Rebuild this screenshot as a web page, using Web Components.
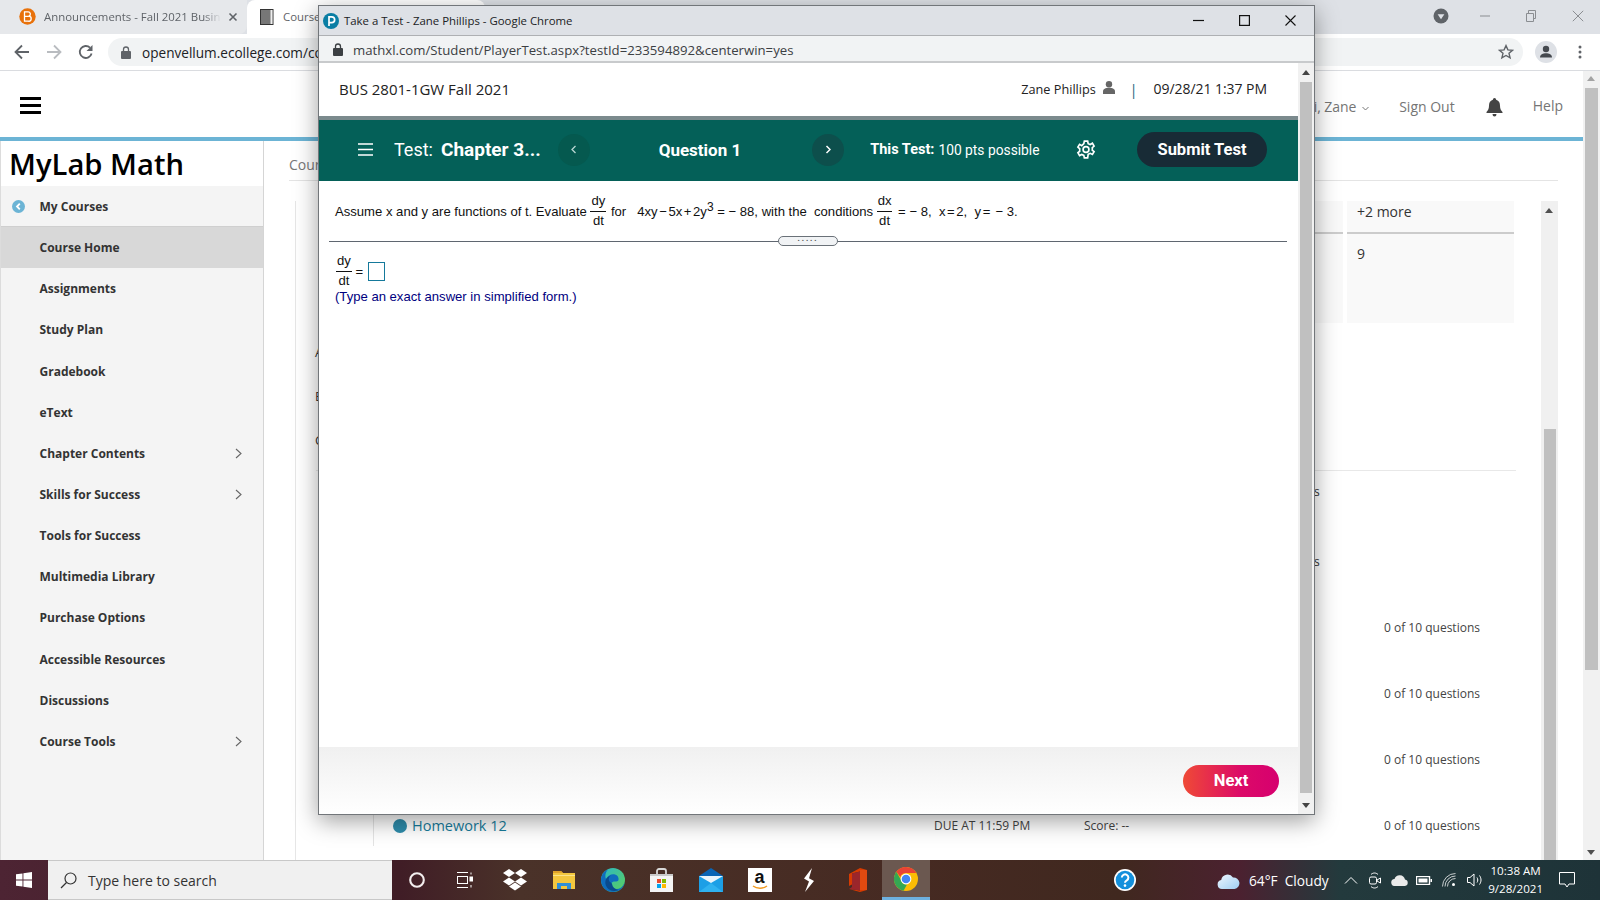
<!DOCTYPE html>
<html lang="en">
<head>
<meta charset="utf-8">
<title>Take a Test</title>
<style>
html,body{margin:0;padding:0;width:1600px;height:900px;overflow:hidden;background:#fff;font-family:"Open Sans",sans-serif}
body{display:flex;flex-direction:column;position:relative}
</style>
</head>
<body>
<chrome-tabs></chrome-tabs>
<chrome-toolbar></chrome-toolbar>
<lms-page>
  <nav-item slot="nav" back>My Courses</nav-item>
  <nav-item slot="nav" active>Course Home</nav-item>
  <nav-item slot="nav">Assignments</nav-item>
  <nav-item slot="nav">Study Plan</nav-item>
  <nav-item slot="nav">Gradebook</nav-item>
  <nav-item slot="nav">eText</nav-item>
  <nav-item slot="nav" more>Chapter Contents</nav-item>
  <nav-item slot="nav" more>Skills for Success</nav-item>
  <nav-item slot="nav">Tools for Success</nav-item>
  <nav-item slot="nav">Multimedia Library</nav-item>
  <nav-item slot="nav">Purchase Options</nav-item>
  <nav-item slot="nav">Accessible Resources</nav-item>
  <nav-item slot="nav">Discussions</nav-item>
  <nav-item slot="nav" more>Course Tools</nav-item>
</lms-page>
<win-taskbar></win-taskbar>
<test-window></test-window>

<script>
function define(name, html, setup){
  customElements.define(name, class extends HTMLElement{
    constructor(){super();this.attachShadow({mode:'open'}).innerHTML=html;}
    connectedCallback(){if(setup)setup(this);}
  });
}

define('chrome-tabs',`<style>
:host{display:flex;height:34px;background:#dee1e6;flex:none;position:relative;font:11.4px "Open Sans",sans-serif;color:#5f6368}
.t1{width:247px;height:34px;background:#e6e8eb;border-bottom-right-radius:8px;display:flex;align-items:center;box-sizing:border-box;padding-left:19px;padding-bottom:1px;flex:none}
.t1 .lbl{margin-left:8px;width:177px;overflow:hidden;white-space:nowrap;-webkit-mask-image:linear-gradient(90deg,#000 90%,transparent);mask-image:linear-gradient(90deg,#000 90%,transparent)}
.t1 .x{margin-left:7px}
.t2{width:238px;height:34px;background:#fff;border-radius:8px 8px 0 0;display:flex;align-items:center;padding-left:13px;padding-bottom:1px;box-sizing:border-box;flex:none}
.t2 .lbl{margin-left:9px}
.sp{flex:1}
.ctl{display:flex;align-items:center;height:34px;padding-bottom:2px;box-sizing:border-box}
.ctl svg{display:block}
</style>
<div class="t1">
<svg width="17" height="17" viewBox="0 0 17 17"><circle cx="8.5" cy="8.5" r="8.2" fill="#e8710a"/><path d="M5.5 3.8h3.6a2.3 2.3 0 0 1 .9 4.4 2.5 2.5 0 0 1-.7 5H5.5zM5.5 8.3h4.2" fill="none" stroke="#fff" stroke-width="1.3"/></svg>
<span class="lbl">Announcements - Fall 2021 Busin</span>
<svg class="x" width="10" height="10" viewBox="0 0 10 10"><path d="M1.5 1.5l7 7M8.5 1.5l-7 7" stroke="#5f6368" stroke-width="1.6"/></svg>
</div>
<div class="t2">
<svg width="14" height="16" viewBox="0 0 14 16"><rect x=".5" y=".5" width="12.5" height="15" fill="#777" stroke="#333"/><rect x="10.5" y="1" width="2" height="14" fill="#eee"/></svg>
<span class="lbl">Course</span>
</div>
<div class="sp"></div>
<div class="ctl" style="margin-right:16px">
<svg width="16" height="16" viewBox="0 0 16 16" style="margin-right:30px"><circle cx="8" cy="8" r="7.5" fill="#5f6368"/><path d="M4.6 6.3h6.8L8 11.2z" fill="#dee1e6"/></svg>
<svg width="12" height="12" viewBox="0 0 12 12" style="margin-right:34px"><path d="M1 6h10" stroke="#8a8d91" stroke-width="1"/></svg>
<svg width="12" height="12" viewBox="0 0 12 12" style="margin-right:35px"><path d="M1.5 3.5h7v8h-7zM3.5 3.5V.5h7v8h-2" fill="none" stroke="#8a8d91"/></svg>
<svg width="12" height="12" viewBox="0 0 12 12"><path d="M.8.8l10.4 10.4M11.2.8L.8 11.2" stroke="#8a8d91" stroke-width="1"/></svg>
</div>`);

define('chrome-toolbar',`<style>
:host{display:flex;align-items:center;height:37px;background:#fff;border-bottom:1px solid #dadce0;box-sizing:border-box;flex:none;position:relative}
.nav{display:flex;align-items:center;width:108px;box-sizing:border-box;padding-left:14px;gap:16px;flex:none}
.pill{width:1415px;height:28px;border-radius:14px;background:#f1f3f4;display:flex;align-items:center;box-sizing:border-box;padding-left:13px;flex:none;font:13.6px "Open Sans",sans-serif;color:#202124}
.pill span{margin-left:11px}
.sp{flex:1}
svg{display:block;flex:none}
</style>
<div class="nav">
<svg width="16" height="16" viewBox="0 0 16 16"><path d="M15 8H2M8 1.5L1.5 8 8 14.5" fill="none" stroke="#5f6368" stroke-width="1.8"/></svg>
<svg width="16" height="16" viewBox="0 0 16 16"><path d="M1 8h13M8 1.5L14.5 8 8 14.5" fill="none" stroke="#b9bcc0" stroke-width="1.8"/></svg>
<svg width="16" height="16" viewBox="0 0 16 16"><path d="M13.6 9.5A6 6 0 1 1 12 3.7" fill="none" stroke="#5f6368" stroke-width="1.8"/><path d="M14.5 1v6h-6z" fill="#5f6368"/></svg>
</div>
<div class="pill">
<svg width="10" height="13" viewBox="0 0 10 13"><path d="M2.5 5.5V3.5a2.5 2.5 0 0 1 5 0v2" fill="none" stroke="#5f6368" stroke-width="1.3"/><rect y="5" width="10" height="8" rx="1" fill="#5f6368"/></svg>
<span>openvellum.ecollege.com/co</span>
<div class="sp"></div>
<svg width="16" height="16" viewBox="0 0 16 16" style="margin-right:9px"><path d="M8 1.6l1.9 4.3 4.6.4-3.5 3 1.1 4.6L8 11.5l-4.1 2.4L5 9.3l-3.5-3 4.6-.4z" fill="none" stroke="#5f6368" stroke-width="1.4"/></svg>
</div>
<svg width="22" height="22" viewBox="0 0 22 22" style="margin-left:12px"><circle cx="11" cy="11" r="11" fill="#dee1e6"/><circle cx="11" cy="8" r="3.2" fill="#45494f"/><path d="M5 16.5c0-3 3-4.3 6-4.3s6 1.3 6 4.3z" fill="#45494f"/></svg>
<svg width="4" height="14" viewBox="0 0 4 14" style="margin-left:21px"><circle cx="2" cy="2" r="1.5" fill="#5f6368"/><circle cx="2" cy="7" r="1.5" fill="#5f6368"/><circle cx="2" cy="12" r="1.5" fill="#5f6368"/></svg>`);

define('nav-item',`<style>
:host{display:flex;align-items:center;height:41.15px;box-sizing:border-box;padding-left:38.5px;font:700 12px "Open Sans",sans-serif;color:#333;position:relative;flex:none}
:host([active]){background:#d8d8d8}
:host([back]){border-bottom:1px solid #cfcfcf}
.i,.c{display:none;position:absolute}
:host([back]) .i{display:block;left:11px;top:14px}
:host([more]) .c{display:block;left:234px;top:15px}
</style>
<svg class="i" width="13" height="13" viewBox="0 0 13 13"><circle cx="6.5" cy="6.5" r="6.5" fill="#6cb4d5"/><path d="M7.8 3.6L5 6.5l2.8 2.9" fill="none" stroke="#fff" stroke-width="1.8"/></svg>
<svg class="c" width="7" height="11" viewBox="0 0 7 11"><path d="M1 1l5 4.5L1 10" fill="none" stroke="#666" stroke-width="1.1"/></svg>
<slot></slot>`);

define('work-row',`<style>
:host{display:grid;grid-template-columns:97px 541px 150px 300px 1fr;align-items:center;height:var(--h,66px);font:12px "Open Sans",sans-serif;color:#444;position:relative;flex:none}
::slotted(*){white-space:nowrap}
</style><slot></slot>`);

define('lms-page',`<style>
:host{display:flex;flex:1;min-height:0;background:#fff;font-family:"Open Sans",sans-serif;color:#757575}
.main{flex:1;min-width:0;display:flex;flex-direction:column}
header{height:66px;box-sizing:border-box;display:flex;align-items:center;flex:none;padding:3px 0 0 20px;font-size:14px}
.burger{width:21px;height:17px;display:flex;flex-direction:column;justify-content:space-between}
.burger i{display:block;height:3.4px;background:#000}
.sp{flex:1}
.blue{height:4px;background:#6cb4d5;flex:none}
.body{flex:1;min-height:0;display:flex}
aside{width:264px;flex:none;box-sizing:border-box;border-left:1px solid #dcdcdc;border-right:1px solid #d5d5d5;background:#f4f4f4;display:flex;flex-direction:column}
.brand{height:45px;background:#fff;flex:none;font:600 29.2px/47px "Open Sans",sans-serif;color:#000;padding-left:8px;white-space:nowrap;overflow:hidden}
.content{flex:1;min-width:0;display:flex;flex-direction:column;padding:0 25px;overflow:hidden}
.crumb{height:40px;flex:none;border-bottom:1px solid #e4e4e4;box-sizing:border-box;font-size:14px;line-height:47px;color:#777}
.split{flex:1;min-height:0;display:flex;margin-top:20px;margin-left:6px;border-left:1px solid #e6e6e6;overflow:hidden}
.area{flex:1;min-width:0;display:flex;flex-direction:column}
.cols{height:122px;flex:none;display:flex;justify-content:flex-end;gap:4px;padding-right:27px;font-size:14px;color:#333}
.col{width:167px;background:#f9f9f9;display:flex;flex-direction:column}
.col.short{width:100px}
.col .h{height:33px;box-sizing:border-box;border-bottom:2px solid #ccc;padding-left:10px;line-height:22px}
.col .v{padding:10px;line-height:20px}
.letters{height:147px;flex:none;padding:7px 0 0 19px;font-size:13px;color:#333;line-height:44px;box-sizing:border-box}
.hr{height:1px;background:#e8e8e8;flex:none;margin:0 25px 0 20px}
.rail{height:54px;width:78px;border-right:1px solid #e4e4e4;align-self:start;box-sizing:border-box}
.hw{display:flex;align-items:center;gap:5px;font:500 14.5px "Open Sans",sans-serif;color:#177c9c;margin-top:1px}
.dot{width:14px;height:14px;border-radius:50%;background:#2e8cab}
.s{padding-left:230px;color:#333;font-size:12px}
</style>
<div class="main">
<header>
<div class="burger"><i></i><i></i><i></i></div>
<div class="sp"></div>
<span style="margin:2px 6px 0 0;letter-spacing:-.1px">i, Zane</span>
<svg width="7" height="5" viewBox="0 0 7 5" style="margin:5px 30px 0 0"><path d="M.5 1l3 3 3-3" fill="none" stroke="#777"/></svg>
<span style="margin:2px 31px 0 0">Sign Out</span>
<svg width="17" height="19" viewBox="0 0 17 19" style="margin:4px 30px 0 0"><path d="M8.5 0a1.6 1.6 0 0 1 1.6 1.7c3 .8 3.9 3.3 3.9 6 0 3 1 4.700 2.500 6.300v1H.5v-1C2 12.400 3 10.700 3 7.700c0-2.700.9-5.200 3.900-6A1.600 1.600 0 0 1 8.500 0zM6.500 16h4a2 2.500 0 0 1-4 0z" fill="#444"/></svg>
<span style="margin:0 20px 0 0">Help</span>
</header>
<div class="blue"></div>
<div class="body">
<aside><div class="brand">MyLab Math</div><slot name="nav"></slot></aside>
<div class="content">
<div class="crumb">Course Home</div>
<div class="split">
<div class="area">
<div class="cols">
<div class="col short"><div class="h"></div></div>
<div class="col"><div class="h">+2 more</div><div class="v">9</div></div>
</div>
<div class="letters">A<br>E<br>C</div>
<div class="hr"></div>
<work-row style="--h:41px"><span></span><span></span><span></span><span class="s">s</span><span></span></work-row>
<work-row style="margin-top:16px"><span></span><span></span><span></span><span class="s">s</span><span></span></work-row>
<work-row><span></span><span></span><span></span><span></span><span>0 of 10 questions</span></work-row>
<work-row><span></span><span></span><span></span><span></span><span>0 of 10 questions</span></work-row>
<work-row><span></span><span></span><span></span><span></span><span>0 of 10 questions</span></work-row>
<work-row><span class="rail"></span><span class="hw"><span class="dot"></span>Homework 12</span><span>DUE AT 11:59 PM</span><span>Score: --</span><span>0 of 10 questions</span></work-row>
</div>
<scroll-bar></scroll-bar>
</div>
</div>
</div>
</div>
<page-scroll></page-scroll>`);

define('scroll-bar',`<style>
:host{display:block;width:17px;background:#f0f0f0;flex:none;position:relative}
.thumb{position:absolute;left:3px;width:12px;top:228px;bottom:0;background:#c0c0c0}
.up{position:absolute;left:4px;top:7px;width:0;height:0;border:4px solid transparent;border-top:0;border-bottom:5px solid #505050}
</style><div class="up"></div><div class="thumb"></div>`);

define('page-scroll',`<style>
:host{display:block;width:17px;background:#f1f1f1;flex:none;position:relative}
.thumb{position:absolute;left:2px;width:13px;top:17px;height:582px;background:#c0c0c0}
.up,.dn{position:absolute;left:4px;width:0;height:0;border:4px solid transparent}
.up{top:5px;border-top:0;border-bottom:5px solid #a3a3a3}
.dn{bottom:5px;border-bottom:0;border-top:5px solid #505050}
</style><div class="up"></div><div class="thumb"></div><div class="dn"></div>`);

define('tray-cell',`<style>
:host{display:flex;align-items:center;justify-content:center;width:49px;height:40px;flex:none;box-sizing:border-box}
:host([active]){background:#6b5850;border-bottom:3px solid #6db1e0;width:48px}
</style><slot></slot>`);

define('win-taskbar',`<style>
:host{display:flex;align-items:center;height:40px;flex:none;color:#fff;font:14px "Open Sans",sans-serif;
background:linear-gradient(90deg,#4d2433 0,#401d26 400px,#4a3229 520px,#462a22 900px,#40281f 1120px,#4b2130 1240px,#233a3d 1340px,#1e3338 1600px)}
svg{display:block;flex:none}
.start{width:48px;display:flex;justify-content:center;flex:none}
.search{width:344px;height:40px;background:#f0f0f0;border:solid #c8c8c8;border-width:1px 0;box-sizing:border-box;display:flex;align-items:center;padding-left:12px;color:#333;flex:none}
.search span{margin-left:11px}
.apps{display:flex;flex:none}
.mid{width:206px;display:flex;justify-content:flex-end;flex:none}
.amz{width:24px;height:24px;background:#fff;display:flex;flex-direction:column;align-items:center;color:#111;font:700 18px/18px "Liberation Sans",sans-serif;position:relative}
.amz svg{position:absolute;bottom:2px;left:4px}
.wx{display:flex;align-items:center;margin-left:81px}
.wx span{margin-left:9px;white-space:pre;font-size:13.7px}
.tray{display:flex;align-items:center;margin-left:15px}
.clock{font-size:11.6px;line-height:18px;text-align:center;width:62px;margin-left:2px}
</style>
<div class="start"><svg width="16" height="16" viewBox="0 0 16 16" fill="#fff"><path d="M0 2.300l6.500-.9v6.200H0zM7.400 1.300L16 0v7.600H7.400zM0 8.400h6.500v6.200L0 13.700zM7.400 8.400H16V16l-8.600-1.200z"/></svg></div>
<div class="search"><svg width="17" height="17" viewBox="0 0 17 17"><circle cx="10.500" cy="6.500" r="5.500" fill="none" stroke="#333" stroke-width="1.200"/><path d="M6.500 10.500L1 16" stroke="#333" stroke-width="1.300"/></svg><span>Type here to search</span></div>
<div class="apps">
<tray-cell><svg width="16" height="16" viewBox="0 0 16 16"><circle cx="8" cy="8" r="6.800" fill="none" stroke="#f3eeee" stroke-width="2.100"/></svg></tray-cell>
<tray-cell><svg width="16" height="16" viewBox="0 0 16 16" fill="none" stroke="#fff" style="margin-left:-2px"><path d="M0 .500h11M0 15.500h11"/><rect x=".5" y="4.500" width="10" height="7"/><rect x="13" y="5" width="3" height="4" fill="#fff"/><path d="M14 .5v2M14 13v2.500"/></svg></tray-cell>
<tray-cell><svg width="24" height="22" viewBox="0 0 24 22" fill="#fff"><path d="M6 0l6 4-6 4-6-4zM18 0l6 4-6 4-6-4zM6 8.500l6 4-6 4-6-4zM18 8.500l6 4-6 4-6-4zM12 13.500l6 4-6 4-6-4z"/></svg></tray-cell>
<tray-cell><svg width="22" height="20" viewBox="0 0 22 20"><path d="M0 1h8l2 2h12v16H0z" fill="#f3c73f"/><path d="M0 1h8l2 2H0z" fill="#dfa22a"/><path d="M0 5h22v1H0z" fill="#fbe38a"/><path d="M4 19v-6h14v6h-4v-3H8v3z" fill="#2f8fd8"/></svg></tray-cell>
<tray-cell><svg width="24" height="24" viewBox="0 0 24 24"><defs><linearGradient id="eg" x1="0" y1="0" x2="1" y2="1"><stop offset="0" stop-color="#2ab7c8"/><stop offset="1" stop-color="#5dd05a"/></linearGradient></defs><circle cx="12" cy="12" r="12" fill="url(#eg)"/><path d="M24 13.500C23 20 18 24 12 24 5 24 0 18.500 0 12 0 7 3 3 7 1.500 4 4.500 4 8.500 5 11c2-4 6-5.500 9-4.500 2.500.8 4 3 3.500 5.500-.3 1.500-2 1.500-3.500 1.500-3 0-4.500 2-3.500 4.500 1 3 6 4 9 2 1.800-1.200 3.500-3.500 4.500-6.500z" fill="#0f6cbd"/><path d="M11 16c.500 3 3 5.500 6.500 6-6 2.500-12-.5-13-6-.8-4 1.500-7.500 5.500-8.500-3 2-2.500 5-1 6.500 1 1 2 1 2 2z" fill="#0a4a8c"/></svg></tray-cell>
<tray-cell><svg width="23" height="24" viewBox="0 0 23 24"><path d="M7 6V3a2 2 0 0 1 2-2h5a2 2 0 0 1 2 2v3" fill="none" stroke="#d8d8d8" stroke-width="1.800"/><rect y="6" width="23" height="18" fill="#f4f4f4"/><rect y="6" width="23" height="2" fill="#c9c9c9"/><rect x="7" y="11" width="4" height="4" fill="#e8492c"/><rect x="12" y="11" width="4" height="4" fill="#7fba00"/><rect x="7" y="16" width="4" height="4" fill="#00a4ef"/><rect x="12" y="16" width="4" height="4" fill="#ffb900"/></svg></tray-cell>
<tray-cell><svg width="24" height="24" viewBox="0 0 24 24"><path d="M12 0l12 8H0z" fill="#0a64b4"/><rect y="8" width="24" height="16" fill="#1c9fe6"/><path d="M0 8l12 7 12-7z" fill="#eaf4fb"/><path d="M0 24l12-9 12 9z" fill="#2fb2f0"/></svg></tray-cell>
<tray-cell><span class="amz">a<svg width="16" height="5" viewBox="0 0 16 5"><path d="M1 1c4 3 10 3 14 0" fill="none" stroke="#f29a1f" stroke-width="1.400"/></svg></span></tray-cell>
<tray-cell><svg width="12" height="24" viewBox="0 0 12 24" fill="#fff"><path d="M9 0L1 10.500l5 3L2 24l9-11-5-2.800z"/></svg></tray-cell>
<tray-cell><svg width="18" height="24" viewBox="0 0 18 24"><path d="M11 0l7 2v20l-7 2-11-3 11 1.500V3.500L3 5.500v11L0 18V6z" fill="#d83b01"/><path d="M3 5.500L11 3.500V22.500L0 21l3-2z" fill="#a4262c" opacity=".9"/><rect x="11" y="2" width="7" height="20" fill="#e04a10"/></svg></tray-cell>
<tray-cell active><svg width="24" height="24" viewBox="0 0 24 24"><circle cx="12" cy="12" r="12" fill="#fbbc05"/><path d="M12 0a12 12 0 0 1 10.400 6H12a6 6 0 0 0-5.700 4L2.300 4.800A12 12 0 0 1 12 0z" fill="#ea4335"/><path d="M2.300 4.800l4.900 8.500a5.400 5.400 0 0 0 5.800 4.200L9.500 23.700A12 12 0 0 1 2.300 4.800z" fill="#34a853"/><circle cx="12" cy="12" r="5.400" fill="#fff"/><circle cx="12" cy="12" r="4.300" fill="#4285f4"/></svg></tray-cell>
</div>
<div class="mid"><svg width="22" height="22" viewBox="0 0 22 22"><circle cx="11" cy="11" r="11" fill="#fff"/><circle cx="11" cy="11" r="9.300" fill="#1490dc"/><path d="M7.800 8.500a3.300 3.200 0 1 1 5 2.800c-1.100.7-1.800 1.200-1.800 2.400" fill="none" stroke="#fff" stroke-width="2"/><circle cx="11" cy="16.600" r="1.300" fill="#fff"/></svg></div>
<div class="wx"><svg width="23" height="17" viewBox="0 0 23 17"><defs><linearGradient id="cl" x1="0" y1="0" x2="1" y2="1"><stop offset="0" stop-color="#eef7ff"/><stop offset="1" stop-color="#9fcdf2"/></linearGradient></defs><path d="M5 17a4.500 4.500 0 0 1-.8-8.900A6.500 6.500 0 0 1 16 5.500 5.800 5.800 0 0 1 17.500 17z" fill="url(#cl)"/></svg><span>64°F  Cloudy</span></div>
<div class="tray">
<svg width="14" height="8" viewBox="0 0 14 8" style="margin-right:11px"><path d="M1 7.500l6-6 6 6" fill="none" stroke="#fff" stroke-width="1"/></svg>
<svg width="12" height="17" viewBox="0 0 12 17" fill="none" stroke="#fff" style="margin-right:10px"><path d="M2 2.500c2-2 5-2 7 0M2 14.500c2 2 5 2 7 0"/><rect x=".5" y="5" width="7" height="7" rx="1.500"/><path d="M8 8l3.500-2v5L8 9z"/></svg>
<svg width="18" height="11" viewBox="0 0 18 11" style="margin-right:7px"><path d="M4 11a3.500 3.500 0 0 1-.5-7A5.500 5.500 0 0 1 14 4.500a3.300 3.300 0 0 1 0 6.500z" fill="#eaeaea"/></svg>
<svg width="16" height="9" viewBox="0 0 16 9" style="margin-right:10px"><rect x=".5" y=".5" width="13" height="8" fill="none" stroke="#fff" stroke-width="1.400"/><rect x="2.500" y="2.500" width="9" height="4" fill="#fff"/><rect x="14.500" y="3" width="1.500" height="3" fill="#fff"/></svg>
<svg width="14" height="14" viewBox="0 0 14 14" fill="none" stroke="#fff" style="margin-right:11px"><path d="M.5 13.500a13 13 0 0 1 13-13M3 13.500a10.500 10.500 0 0 1 10.500-10.500M5.500 13.500a8 8 0 0 1 8-8" opacity=".75"/><circle cx="11.500" cy="11.500" r="1.500" fill="#fff" stroke="none"/></svg>
<svg width="16" height="14" viewBox="0 0 16 14" fill="none" stroke="#fff"><path d="M.5 4.500H3L7 1v12L3 9.500H.5zM10 4.500c1 1.500 1 3.500 0 5M12.500 2.500c2 3 2 6 0 9"/></svg>
</div>
<div class="clock">10:38 AM<br>9/28/2021</div>
<svg width="16" height="16" viewBox="0 0 16 16" fill="none" stroke="#fff" style="margin-left:12px"><path d="M.5.500h15v11.500H10l-2 3-2-3H.5z"/></svg>`);

define('q-frac',`<style>
:host{display:inline-flex;flex-direction:column;align-items:center;vertical-align:middle;flex:none;line-height:16px;font-size:13.1px;position:relative}
.n{border-bottom:1px solid #111;padding:0 1px 2px;min-width:15px;text-align:center;width:100%;box-sizing:border-box}
.d{padding-top:1px}
</style><div class="n"><slot name="n"></slot></div><div class="d"><slot name="d"></slot></div>`);

define('test-window',`<style>
:host{position:absolute;left:318px;top:5px;width:997px;height:810px;box-sizing:border-box;border:1px solid #72767a;background:#fff;display:flex;flex-direction:column;box-shadow:0 6px 22px rgba(0,0,0,.38);font-family:"Open Sans",sans-serif;color:#111}
svg{display:block;flex:none}
.title{height:30px;background:#dee1e6;display:flex;align-items:center;flex:none;border-bottom:1px solid #aeb0b3;box-sizing:border-box;padding-left:4px;font-size:11.4px;color:#202124}
.title span{margin-left:5px;white-space:nowrap}
.sp{flex:1}
.addr{height:27px;background:#f1f3f4;display:flex;align-items:center;flex:none;border-bottom:2px solid #c8cacc;box-sizing:border-box;padding:2px 0 0 14px;font-size:13.2px;color:#3c4043}
.addr span{margin-left:10px}
.wrap{flex:1;min-height:0;display:flex}
.page{flex:1;min-width:0;display:flex;flex-direction:column}
.top{height:53px;flex:none;display:flex;align-items:center;padding:0 31px 0 20px;color:#222;font-size:15px}
.band{height:4px;background:#7b8a8d;flex:none}
.bar{height:61px;background:#046058;flex:none;display:flex;align-items:center;color:#fff;font:15px Roboto,sans-serif;padding-bottom:2px;box-sizing:border-box}
.circ{width:32px;height:32px;border-radius:50%;background:#0d4f4c;display:flex;align-items:center;justify-content:center;flex:none}
.circ.l{background:#05594f}
.submit{width:130px;height:35px;border-radius:18px;background:#182b36;display:flex;align-items:center;justify-content:center;font:700 16.500px Roboto,sans-serif;flex:none}
.q{flex:1;min-height:0;box-sizing:border-box;font:13.1px "Liberation Sans",Arial,sans-serif;color:#111}
.line{display:flex;align-items:center;height:60px;margin-left:16px;white-space:pre}
.o{margin:0 1.6px}
.rule{height:1px;background:#5f6670;margin:0 11px 0 10px;position:relative;flex:none}
.handle{position:absolute;left:449px;top:-5px;width:60px;height:10px;box-sizing:border-box;border:1px solid #6a7178;border-radius:6px;background:#f1f3f5;text-align:center;font:700 8px/3px "Liberation Sans",sans-serif;letter-spacing:2px;color:#555}
.ans{margin:11px 0 0 17px;display:flex;align-items:center;white-space:pre}
.box{width:17px;height:19px;border:1px solid #15799b;box-sizing:border-box;margin-left:5px}
.hint{margin:-2px 0 0 16px;color:#000080;line-height:20px}
sup{font-size:12px;line-height:0;position:relative;top:1px;vertical-align:super}
.foot{height:67px;flex:none;background:linear-gradient(#f0f0f0,#fff);display:flex;justify-content:flex-end;padding:18px 19px 0 0;box-sizing:border-box}
.next{width:96px;height:32px;border-radius:16px;background:linear-gradient(90deg,#ef4a36,#dc0a68 60%,#d6006f);color:#fff;font:700 16.500px/32px Roboto,sans-serif;text-align:center}
.sb{width:16px;background:#f1f1f1;position:relative;flex:none}
.sb .t{position:absolute;left:2px;width:12px;top:19px;height:711px;background:#c0c0c0}
.up,.dn{position:absolute;left:4px;width:0;height:0;border:4px solid transparent}
.up{top:7px;border-top:0;border-bottom:5px solid #444}
.dn{bottom:6px;border-bottom:0;border-top:5px solid #444}
</style>
<div class="title">
<svg width="16" height="16" viewBox="0 0 16 16"><circle cx="8" cy="8" r="8" fill="#0a7ea4"/><path d="M6 13V3.800h2.700a2.900 2.900 0 0 1 0 5.900H6" fill="none" stroke="#fff" stroke-width="1.700"/></svg>
<span>Take a Test - Zane Phillips - Google Chrome</span>
<div class="sp"></div>
<svg width="11" height="11" viewBox="0 0 11 11" style="margin-right:35px"><path d="M0 5.500h11" stroke="#111" stroke-width="1.200"/></svg>
<svg width="11" height="11" viewBox="0 0 11 11" style="margin-right:35px"><rect x=".6" y=".6" width="9.800" height="9.800" fill="none" stroke="#111" stroke-width="1.200"/></svg>
<svg width="11" height="11" viewBox="0 0 11 11" style="margin-right:18px"><path d="M.5.500l10 10M10.500.500l-10 10" stroke="#111" stroke-width="1.100"/></svg>
</div>
<div class="addr">
<svg width="10" height="13" viewBox="0 0 10 13"><path d="M2.500 5.500V3.500a2.500 2.500 0 0 1 5 0v2" fill="none" stroke="#3c4043" stroke-width="1.300"/><rect y="5" width="10" height="8" rx="1" fill="#3c4043"/></svg>
<span>mathxl.com/Student/PlayerTest.aspx?testId=233594892&amp;centerwin=yes</span>
</div>
<div class="wrap">
<div class="page">
<div class="top">
<span style="margin-top:-2px">BUS 2801-1GW Fall 2021</span>
<div class="sp"></div>
<span style="font-size:12.7px;margin-top:-2px">Zane Phillips</span>
<svg width="12" height="13" viewBox="0 0 12 13" style="margin:-4px 0 0 7px"><circle cx="6" cy="3.200" r="3.200" fill="#666"/><path d="M0 13v-2.500C0 8 2.500 6.800 6 6.800s6 1.200 6 3.700V13z" fill="#666"/></svg>
<span style="margin-left:15px;color:#15607a;font-size:14px">|</span>
<span style="margin:-2px 0 0 16px;font-size:14px;letter-spacing:-.05px">09/28/21 1:37 PM</span>
</div>
<div class="band"></div>
<div class="bar">
<svg width="15" height="13" viewBox="0 0 15 13" style="margin-left:39px"><path d="M0 1h15M0 6.500h15M0 12h15" stroke="#fff" stroke-width="1.600"/></svg>
<span style="margin-left:21px;font-size:18px">Test:</span>
<b style="margin-left:8px;font-size:19px;white-space:nowrap">Chapter 3...</b>
<div class="circ l" style="margin-left:17px"><svg width="6" height="9" viewBox="0 0 6 9"><path d="M4.500 1L1 4.500 4.500 8" fill="none" stroke="#b9d6d2" stroke-width="1.300"/></svg></div>
<b style="margin-left:69px;font-size:17px;white-space:nowrap">Question 1</b>
<div class="circ" style="margin-left:71px"><svg width="6" height="9" viewBox="0 0 6 9"><path d="M1.500 1L5 4.500 1.500 8" fill="none" stroke="#fff" stroke-width="1.500"/></svg></div>
<b style="margin-left:26px;font-size:14.500px;white-space:nowrap">This Test:</b>
<span style="margin-left:4px;font-size:13.800px;white-space:nowrap">100 pts possible</span>
<svg width="20" height="21" viewBox="0 0 24 24" style="margin-left:36px" fill="none" stroke="#fff" stroke-width="2"><circle cx="12" cy="12" r="3.500"/><path d="M10 2h4l.6 3 2.500 1.100 2.600-1.600 2 3.400-2.200 2c.2.900.2 1.800 0 2.800l2.200 1.900-2 3.400-2.600-1.400-2.500 1.200L14 22h-4l-.6-2.900-2.500-1.200-2.600 1.400-2-3.400 2.200-1.900c-.2-1-.2-1.900 0-2.800l-2.200-2 2-3.400 2.600 1.600L9.400 5z"/></svg>
<div class="sp"></div>
<div class="submit" style="margin-right:31px">Submit Test</div>
</div>
<div class="q">
<div class="line"><span>Assume x and y are functions of t. Evaluate </span><q-frac><span slot="n">dy</span><span slot="d">dt</span></q-frac><span style="margin-left:1px"> for   4xy<span class="o">−</span>5x<span class="o">+</span>2y<sup>3</sup> = − 88, with the  conditions </span><q-frac><span slot="n">dx</span><span slot="d">dt</span></q-frac><span style="margin-left:2px"> = − 8,  x<span class="o">=</span>2,  y<span class="o">=</span> − 3.</span></div>
<div class="rule"><div class="handle">.....</div></div>
<div class="ans"><q-frac><span slot="n">dy</span><span slot="d">dt</span></q-frac> =<div class="box"></div></div>
<div class="hint">(Type an exact answer in simplified form.)</div>
</div>
<div class="foot"><div class="next">Next</div></div>
</div>
<div class="sb"><div class="up"></div><div class="t"></div><div class="dn"></div></div>
</div>`);
</script>
</body>
</html>
